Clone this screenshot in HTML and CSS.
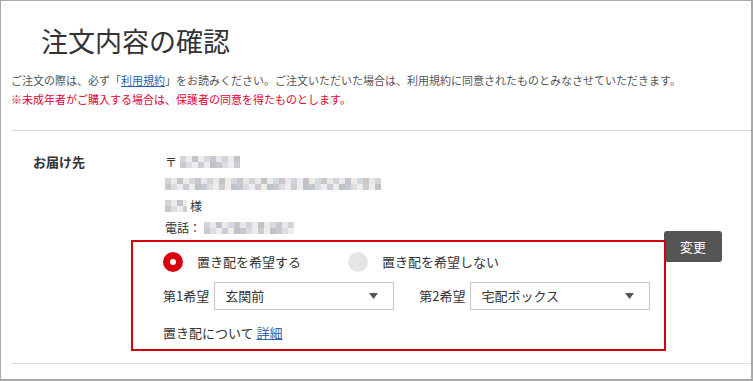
FILE: index.html
```html
<!DOCTYPE html>
<html lang="ja">
<head>
<meta charset="utf-8">
<link rel="stylesheet" href="styles.css">
</head>
<body>
<div class="frame">
  <h1 class="title">注文内容の確認</h1>
  <div class="notice">
    <p class="notice-line">ご注文の際は、必ず「<a class="link" href="#">利用規約</a>」をお読みください。ご注文いただいた場合は、利用規約に同意されたものとみなさせていただきます。</p>
    <p class="notice-line notice-red">※未成年者がご購入する場合は、保護者の同意を得たものとします。</p>
  </div>
  <section class="delivery">
    <div class="delivery-label">お届け先</div>
    <div class="delivery-body">
      <div class="address">
        <div class="addr-line">〒 <span class="mosaic m-zip"></span></div>
        <div class="addr-line"><span class="mosaic m-addr"></span></div>
        <div class="addr-line"><span class="mosaic m-name"></span> 様</div>
        <div class="addr-line">電話：<span class="mosaic m-tel"></span></div>
      </div>
      <div class="okihai">
        <div class="radio-row">
          <label class="radio-item radio-first"><span class="radio radio-on"></span><span class="radio-text">置き配を希望する</span></label>
          <label class="radio-item"><span class="radio"></span><span class="radio-text">置き配を希望しない</span></label>
        </div>
        <div class="select-row">
          <span class="select-label">第1希望</span>
          <div class="select"><span>玄関前</span><svg class="arrow" width="9" height="6" viewBox="0 0 9 6"><path d="M0 0H9L4.5 6Z" fill="#555"/></svg></div>
          <span class="select-label second">第2希望</span>
          <div class="select"><span>宅配ボックス</span><svg class="arrow" width="9" height="6" viewBox="0 0 9 6"><path d="M0 0H9L4.5 6Z" fill="#555"/></svg></div>
        </div>
        <div class="about">置き配について <a class="link detail" href="#">詳細</a></div>
      </div>
    </div>
    <div class="delivery-action"><button class="btn" type="button">変更</button></div>
  </section>
</div>
</body>
</html>
```
FILE: styles.css
```css
html, body {
  margin: 0;
  padding: 0;
  background: #fff;
}
body {
  font-family: "Noto Sans CJK JP", "Noto Sans", sans-serif;
  color: #333;
}
.frame {
  width: 753px;
  height: 381px;
  box-sizing: border-box;
  border-style: solid;
  border-color: #a9a9a9;
  border-width: 1px 2px 2px 1px;
  padding-left: 10px;
  overflow: hidden;
  background: #fff;
}
.title {
  margin: 0 0 0 30px;
  padding-top: 27px;
  font-size: 27px;
  line-height: 26px;
  font-weight: 400;
  color: #333;
}
.notice {
  margin-top: 17px;
}
.notice-line {
  margin: 0;
  font-size: 11px;
  line-height: 19px;
  color: #555;
  white-space: nowrap;
}
.notice-red {
  color: #e60033;
}
.link {
  color: #1f5fb0;
  text-decoration: underline;
}
.delivery {
  margin-top: 21px;
  margin-left: 1px;
  border-top: 1px solid #dcdcdc;
  border-bottom: 1px solid #dcdcdc;
  display: grid;
  grid-template-columns: 119px 535px auto;
  padding: 20px 0 12px;
}
.delivery-label {
  padding-left: 21px;
  font-size: 13px;
  font-weight: 700;
  line-height: 22px;
  color: #333;
}
.address {
  padding-left: 34px;
  font-size: 12px;
  line-height: 22px;
  color: #333;
}
.addr-line {
  display: flex;
  align-items: center;
  height: 22px;
  gap: 3px;
}
.mosaic {
  display: inline-block;
  height: 12px;
  opacity: 0.8;
  background:
    repeating-linear-gradient(90deg, #cfc6cc 0 6px, #e4e7ea 6px 12px, #b7b5bb 12px 18px, #ebe8e3 18px 24px, #cad2da 24px 30px, #c0b8bc 30px 36px, #dfe2e8 36px 42px) 0 0 / 100% 6px no-repeat,
    repeating-linear-gradient(90deg, #b8bcc4 0 6px, #d8d4d6 6px 12px, #e6e9ee 12px 18px, #c4c0c6 18px 24px, #ece9e4 24px 30px, #aeb3bc 30px 36px) 0 6px / 100% 6px no-repeat;
}
.m-zip { width: 60px; }
.m-addr { width: 216px; }
.m-name { width: 22px; }
.m-tel { width: 90px; }
.okihai {
  position: relative;
  z-index: 1;
  margin-top: 1px;
  border: 2px solid #d7000f;
  padding: 10px 0 6px 30px;
  font-size: 13px;
  color: #333;
}
.radio-row {
  display: flex;
  align-items: center;
  height: 20px;
}
.radio-item {
  display: flex;
  align-items: center;
  gap: 14px;
}
.radio-first {
  width: 185px;
}
.radio {
  width: 20px;
  height: 20px;
  border-radius: 50%;
  background: #e5e5e5;
  box-sizing: border-box;
  flex: none;
}
.radio-on {
  background: #d7000f;
  position: relative;
}
.radio-on::after {
  content: "";
  position: absolute;
  left: 7px;
  top: 7px;
  width: 6px;
  height: 6px;
  border-radius: 50%;
  background: #fff;
}
.radio-text {
  line-height: 20px;
}
.select-row {
  display: flex;
  align-items: center;
  margin-top: 10px;
  height: 28px;
}
.select-label {
  margin-right: 5px;
  line-height: 20px;
}
.select-label.second {
  margin-left: 25px;
}
.select {
  width: 180px;
  height: 28px;
  box-sizing: border-box;
  border: 1px solid #c8c8c8;
  padding: 0 15px 0 10px;
  display: flex;
  align-items: center;
  justify-content: space-between;
  background: #fff;
  line-height: 26px;
}
.arrow {
  display: block;
}
.about {
  margin-top: 13px;
  line-height: 20px;
}
.detail {
  color: #2f65ad;
}
.delivery-action {
  margin-left: -2px;
  padding-top: 80px;
}
.btn {
  display: block;
  width: 58px;
  height: 31px;
  border: none;
  border-radius: 3px;
  background: #555;
  color: #fff;
  font-family: "Noto Sans CJK JP", sans-serif;
  font-size: 13px;
  padding: 0;
  line-height: 31px;
}
```
